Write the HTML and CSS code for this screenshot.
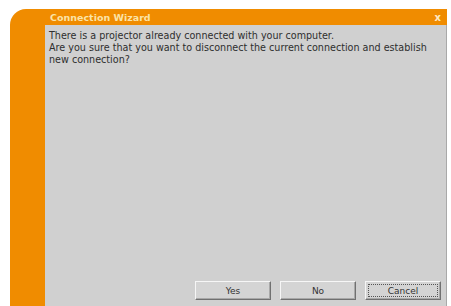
FILE: index.html
```html
<!DOCTYPE html>
<html>
<head>
<meta charset="utf-8">
<link rel="stylesheet" href="styles.css">
</head>
<body>
<div class="frame">
  <div class="titlebar">
    <span class="title">Connection Wizard</span>
    <span class="close">x</span>
  </div>
  <div class="content">
    <div class="message">
      <p>There is a projector already connected with your computer.</p>
      <p>Are you sure that you want to disconnect the current connection and establish new connection?</p>
    </div>
    <div class="buttons">
      <button class="btn">Yes</button>
      <button class="btn">No</button>
      <button class="btn focused"><span class="focus">Cancel</span></button>
    </div>
  </div>
</div>
</body>
</html>
```
FILE: styles.css
```css
html, body {
  margin: 0;
  padding: 0;
  background: #ffffff;
  height: 306px;
  overflow: hidden;
}
.frame {
  margin: 9px 0 0 10px;
  width: 437px;
  height: 297px;
  background: #f08c00;
  border-top-left-radius: 16px;
  display: flex;
  flex-direction: column;
}
.titlebar {
  height: 16px;
  display: flex;
  align-items: center;
  justify-content: space-between;
  padding: 0 6px 0 40px;
  font-family: "DejaVu Sans", sans-serif;
  font-size: 9.5px;
  font-weight: bold;
  color: #fbe3a6;
}
.close {
  font-size: 10px;
  color: #fde9c4;
}
.content {
  flex: 1;
  margin-left: 35px;
  background: #d0d0d0;
  border-right: 1px solid #a9a9a9;
  display: flex;
  flex-direction: column;
  justify-content: space-between;
  padding: 5px 5px 6px 4px;
}
.message {
  font-family: "DejaVu Sans", Verdana, sans-serif;
  font-size: 9.6px;
  line-height: 12px;
  color: #2e2e2e;
  max-width: 388px;
}
.message p {
  margin: 0;
}
.buttons {
  display: flex;
  justify-content: flex-end;
  gap: 9px;
}
.btn {
  width: 76px;
  height: 19px;
  background: #d4d4d4;
  border: 1px solid;
  border-color: #f6f6f6 #707070 #707070 #f6f6f6;
  box-shadow: inset -1px -1px 0 #a8a8a8;
  font-family: "DejaVu Sans", Verdana, sans-serif;
  font-size: 9px;
  color: #333333;
  padding: 0;
  display: flex;
  align-items: center;
  justify-content: center;
}
.focused {
  padding: 2px;
}
.focus {
  flex: 1;
  align-self: stretch;
  display: flex;
  align-items: center;
  justify-content: center;
  border: 1px dotted #555555;
}
```
